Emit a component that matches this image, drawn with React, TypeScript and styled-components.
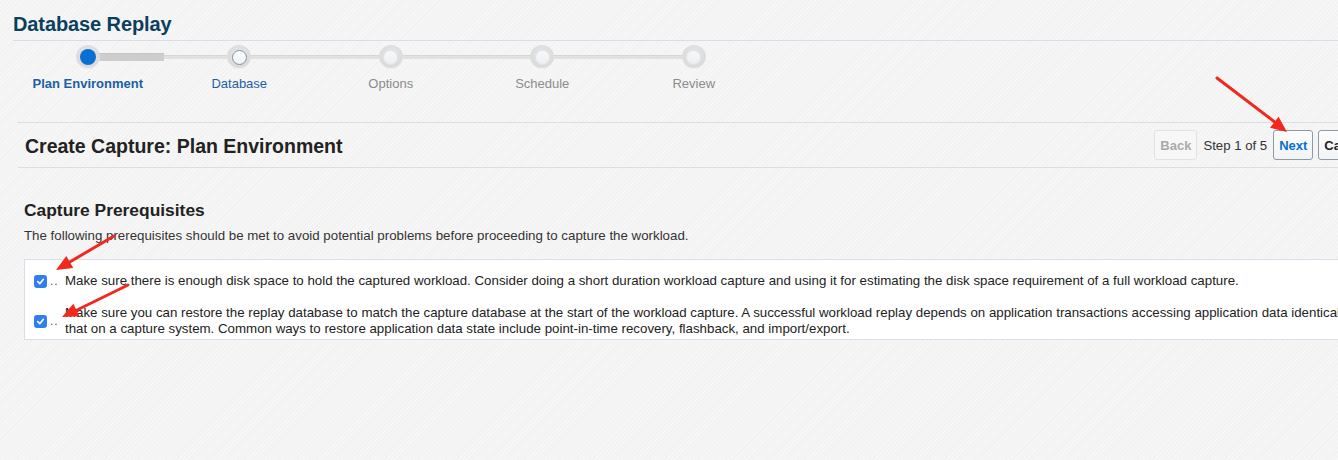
import React from "react";
import styled, { createGlobalStyle, css } from "styled-components";

const Global = createGlobalStyle`
  html, body { margin: 0; padding: 0; }
  body {
    width: 1338px;
    height: 460px;
    overflow: hidden;
    font-family: "Liberation Sans", Arial, Helvetica, sans-serif;
    background-color: #f4f4f4;
    background-image: repeating-linear-gradient(135deg, #f6f6f6 0px, #f6f6f6 2px, #f1f1f1 2px, #f1f1f1 3px);
    color: #333;
  }
`;

const Page = styled.div`
  position: relative;
  width: 1440px;
  height: 460px;
`;

const TitleBar = styled.div`
  margin: 0 0 0 13px;
  padding: 12px 0 4px;
  border-bottom: 1px solid #d3dfea;
`;

const Title = styled.h1`
  margin: 0;
  font-size: 20px;
  line-height: 24px;
  font-weight: bold;
  color: #0b3f5e;
  letter-spacing: -0.1px;
`;

const Stepper = styled.div`
  display: flex;
  padding-left: 12px;
  margin-top: 4px;
`;

const Step = styled.div`
  width: 151.5px;
  display: flex;
  flex-direction: column;
  align-items: center;
`;

const Track = styled.div<{ $first?: boolean; $last?: boolean; $progress?: boolean }>`
  position: relative;
  width: 100%;
  height: 24px;
  display: flex;
  justify-content: center;
  align-items: center;
  &::before, &::after {
    content: "";
    position: absolute;
    top: 10px;
    height: 4px;
    background: #e1e1e1;
    border-top: 1px solid #d6d6d6;
    box-sizing: border-box;
  }
  &::before { left: 0; right: 50%; ${(p) => p.$first && css`display: none;`} }
  &::after {
    left: 50%; right: 0;
    ${(p) => p.$last && css`display: none;`}
    ${(p) => p.$progress && css`background: #cdcdcd; border-top-color: #c4c4c4; height: 8px; top: 8px;`}
  }
`;

const Ring = styled.div`
  position: relative;
  z-index: 1;
  width: 24px;
  height: 24px;
  border-radius: 50%;
  background: radial-gradient(circle at 50% 40%, #e9e9e9 0%, #d9d9d9 70%, #cfcfcf 100%);
  box-shadow: inset 0 -1px 1px rgba(255,255,255,0.7);
  display: flex;
  align-items: center;
  justify-content: center;
`;

const Dot = styled.div<{ $state: "active" | "next" | "idle" }>`
  width: 15px;
  height: 15px;
  border-radius: 50%;
  box-sizing: border-box;
  ${(p) =>
    p.$state === "active"
      ? css`background: #0a6fd2; width: 16px; height: 16px;`
      : p.$state === "next"
      ? css`background: linear-gradient(#ffffff, #eef1f4); border: 1px solid #7d93a8;`
      : css`background: linear-gradient(#f7f8fa, #eceff2); border: 1px solid #e2e5e8;`}
`;

const StepLabel = styled.div<{ $state: "active" | "next" | "idle" }>`
  margin-top: 7px;
  font-size: 13px;
  line-height: 16px;
  white-space: nowrap;
  color: ${(p) => (p.$state === "idle" ? "#8b8b8b" : "#1c5fa5")};
  font-weight: ${(p) => (p.$state === "active" ? "bold" : "normal")};
`;

const Header = styled.div`
  margin: 30px 0 0 18px;
  height: 44px;
  border-top: 1px solid #d6e0ea;
  border-bottom: 1px solid #d6e0ea;
  display: flex;
  align-items: center;
  padding-left: 7px;
`;

const HeaderTitle = styled.h2`
  flex: 1;
  margin: 0;
  padding-top: 3px;
  font-size: 19.5px;
  font-weight: bold;
  color: #222;
`;

const Actions = styled.div`
  display: flex;
  align-items: center;
  gap: 5px;
  padding-right: 67px;
`;

const Button = styled.button<{ $variant?: "disabled" | "primary" | "normal" }>`
  height: 30px;
  padding: 0 5px;
  border-radius: 3px;
  font-family: inherit;
  font-size: 13px;
  font-weight: bold;
  background: linear-gradient(#fdfdfd, #f1f3f5);
  ${(p) =>
    p.$variant === "disabled"
      ? css`color: #a9a9a9; border: 1px solid #e0e3e6; background: #f7f7f7;`
      : p.$variant === "primary"
      ? css`color: #0a6fcf; border: 1px solid #8c9aa8;`
      : css`color: #222; border: 1px solid #8c9aa8;`}
`;

const StepInfo = styled.span`
  font-size: 13.2px;
  color: #333;
  margin: 0 1px;
`;

const Section = styled.div`
  margin: 32px 0 0 24px;
`;

const SectionTitle = styled.h3`
  margin: 0;
  font-size: 17.4px;
  line-height: 20px;
  font-weight: bold;
  color: #222;
`;

const Description = styled.p`
  margin: 8px 0 0;
  font-size: 13.3px;
  line-height: 16px;
  color: #333;
`;

const List = styled.div`
  margin-top: 15px;
  background: #fff;
  border: 1px solid #d6e0ea;
  padding: 13px 0 2px 9px;
  display: flex;
  flex-direction: column;
  gap: 16px;
`;

const Row = styled.div`
  display: flex;
  align-items: center;
`;

const Check = styled.span`
  width: 13px;
  height: 13px;
  border-radius: 3px;
  background: #2f7ff2;
  display: inline-flex;
  align-items: center;
  justify-content: center;
  flex-shrink: 0;
`;

const Ellipsis = styled.span`
  width: 18px;
  padding-left: 3px;
  box-sizing: border-box;
  font-size: 12px;
  color: #555;
  letter-spacing: 1px;
`;

const RowText = styled.div`
  font-size: 13.3px;
  line-height: 16px;
  color: #222;
  white-space: nowrap;
`;

const Overlay = styled.svg`
  position: absolute;
  left: 0;
  top: 0;
  pointer-events: none;
`;

const steps: { label: string; state: "active" | "next" | "idle" }[] = [
  { label: "Plan Environment", state: "active" },
  { label: "Database", state: "next" },
  { label: "Options", state: "idle" },
  { label: "Schedule", state: "idle" },
  { label: "Review", state: "idle" },
];

const CheckBox = () => (
  <Check>
    <svg width="9" height="9" viewBox="0 0 10 10">
      <path d="M2 5.2 L4.2 7.4 L8.2 2.6" fill="none" stroke="#fff" strokeWidth="1.8" strokeLinecap="round" strokeLinejoin="round" />
    </svg>
  </Check>
);

const arrows = [
  { x1: 1217, y1: 78, x2: 1276, y2: 123, head: "1287,132 1270,127.7 1278.6,116.7" },
  { x1: 114, y1: 236, x2: 68, y2: 263, head: "56,270 66.3,255.9 73.3,267.9" },
  { x1: 128, y1: 285, x2: 75, y2: 311, head: "62,317 73.3,303.7 79.5,316.3" },
];

export default function App() {
  return (
    <Page>
      <Global />
      <TitleBar>
        <Title>Database Replay</Title>
      </TitleBar>
      <Stepper>
        {steps.map((s, i) => (
          <Step key={s.label}>
            <Track $first={i === 0} $last={i === steps.length - 1} $progress={i === 0}>
              <Ring>
                <Dot $state={s.state} />
              </Ring>
            </Track>
            <StepLabel $state={s.state}>{s.label}</StepLabel>
          </Step>
        ))}
      </Stepper>
      <Header>
        <HeaderTitle>Create Capture: Plan Environment</HeaderTitle>
        <Actions>
          <Button $variant="disabled">Back</Button>
          <StepInfo>Step 1 of 5</StepInfo>
          <Button $variant="primary">Next</Button>
          <Button $variant="normal">Cancel</Button>
        </Actions>
      </Header>
      <Section>
        <SectionTitle>Capture Prerequisites</SectionTitle>
        <Description>
          The following prerequisites should be met to avoid potential problems before proceeding to capture the workload.
        </Description>
        <List>
          <Row>
            <CheckBox />
            <Ellipsis>..</Ellipsis>
            <RowText>
              Make sure there is enough disk space to hold the captured workload. Consider doing a short duration workload capture and using it for estimating the disk space requirement of a full workload capture.
            </RowText>
          </Row>
          <Row>
            <CheckBox />
            <Ellipsis>..</Ellipsis>
            <RowText>
              Make sure you can restore the replay database to match the capture database at the start of the workload capture. A successful workload replay depends on application transactions accessing application data identical to
              <br />
              that on a capture system. Common ways to restore application data state include point-in-time recovery, flashback, and import/export.
            </RowText>
          </Row>
        </List>
      </Section>
      <Overlay width="1338" height="460" viewBox="0 0 1338 460">
        {arrows.map((a, i) => (
          <g key={i}>
            <line x1={a.x1} y1={a.y1} x2={a.x2} y2={a.y2} stroke="#f2281f" strokeWidth="3" strokeLinecap="round" />
            <polygon points={a.head} fill="#f2281f" />
          </g>
        ))}
      </Overlay>
    </Page>
  );
}
